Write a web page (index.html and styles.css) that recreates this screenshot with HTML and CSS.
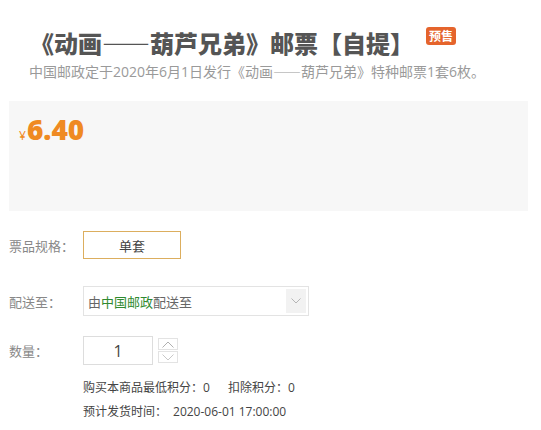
FILE: index.html
```html
<!DOCTYPE html>
<html lang="zh-CN">
<head>
<meta charset="utf-8">
<title>《动画——葫芦兄弟》邮票【自提】</title>
<link rel="stylesheet" href="styles.css">
</head>
<body>
<div class="page">
  <div class="title-row">
    <h1 class="title">《动画——葫芦兄弟》邮票【自提】</h1>
    <span class="badge">预售</span>
  </div>
  <p class="subtitle">中国邮政定于2020年6月1日发行《动画<span class="cjk">——</span>葫芦兄弟》特种邮票1套6枚。</p>

  <div class="price-box">
    <div class="price"><span class="yen">¥</span><span class="amount">6.40</span></div>
  </div>

  <div class="row row-spec">
    <span class="label">票品规格：</span>
    <div class="spec-option">单套</div>
  </div>

  <div class="row row-ship">
    <span class="label">配送至：</span>
    <div class="select">
      <span class="select-text">由<span class="green">中国邮政</span>配送至</span>
      <span class="select-arrow">
        <svg width="10" height="6" viewBox="0 0 10 6"><path d="M0.5 0.5 L5 5 L9.5 0.5" fill="none" stroke="#b5b5b5" stroke-width="1"/></svg>
      </span>
    </div>
  </div>

  <div class="row row-qty">
    <span class="label">数量：</span>
    <div class="qty-input">1</div>
    <div class="spin">
      <span class="spin-btn">
        <svg width="12" height="7" viewBox="0 0 12 7"><path d="M0.5 6.5 L6 1 L11.5 6.5" fill="none" stroke="#b0b0b0" stroke-width="1"/></svg>
      </span>
      <span class="spin-btn">
        <svg width="12" height="7" viewBox="0 0 12 7"><path d="M0.5 0.5 L6 6 L11.5 0.5" fill="none" stroke="#c8c8c8" stroke-width="1"/></svg>
      </span>
    </div>
  </div>

  <div class="info">
    <p class="info-line"><span>购买本商品最低积分：0</span><span class="gap">扣除积分：0</span></p>
    <p class="info-line"><span>预计发货时间：</span><span class="date">2020-06-01 17:00:00</span></p>
  </div>
</div>
</body>
</html>
```

FILE: styles.css
```css
* { box-sizing: border-box; }
body {
  margin: 0;
  background: #fff;
  font-family: "Open Sans", "Noto Sans CJK SC", sans-serif;
  color: #333;
}
.page {
  width: 541px;
  padding: 0 13px 0 9px;
}
.title-row {
  display: flex;
  align-items: center;
  margin-top: 26px;
  padding-left: 21px;
  height: 34px;
}
.title {
  margin: 0;
  font-size: 24px;
  font-weight: 900;
  color: #555;
  line-height: 34px;
  font-family: "Noto Sans CJK SC", sans-serif;
}
.badge {
  margin-left: 12px;
  margin-top: -14px;
  background: #e5642c;
  color: #fff;
  font-size: 12px;
  font-weight: bold;
  line-height: 18px;
  height: 18px;
  padding: 0 3px;
  border-radius: 3px;
  font-family: "Noto Sans CJK SC", sans-serif;
}
.subtitle {
  margin: 1px 0 0;
  padding-left: 20px;
  font-size: 14px;
  line-height: 20px;
  color: #9a9a9a;
}
.cjk { font-family: "Noto Sans CJK SC", sans-serif; }
.price-box {
  margin-top: 19px;
  height: 110px;
  background: #f7f7f7;
  padding: 10px 0 0 10px;
}
.price {
  display: flex;
  align-items: baseline;
  color: #ef8a22;
  line-height: 36px;
}
.yen {
  font-size: 12px;
  margin-right: 1px;
}
.amount {
  font-size: 28px;
  font-weight: 800;
}
.row {
  display: flex;
  align-items: center;
}
.label {
  width: 74px;
  font-size: 13px;
  color: #888;
  font-family: "Noto Sans CJK SC", sans-serif;
}
.row-spec { margin-top: 20px; height: 28px; }
.spec-option {
  width: 98px;
  height: 28px;
  border: 1px solid #dcae5e;
  display: flex;
  align-items: center;
  justify-content: center;
  font-size: 13px;
  color: #444;
}
.row-ship { margin-top: 27px; height: 30px; }
.select {
  width: 226px;
  height: 30px;
  border: 1px solid #e3e3e3;
  display: flex;
  align-items: center;
  justify-content: space-between;
  padding: 2px 2px 2px 4px;
}
.select-text {
  font-size: 13px;
  color: #666;
}
.green { color: #2f8a2f; }
.select-arrow {
  width: 20px;
  height: 100%;
  background: #f2f2f2;
  display: flex;
  align-items: center;
  justify-content: center;
}
.row-qty { margin-top: 20px; height: 29px; }
.qty-input {
  width: 70px;
  height: 29px;
  border: 1px solid #ddd;
  display: flex;
  align-items: center;
  justify-content: center;
  font-size: 16px;
  color: #444;
}
.spin {
  display: flex;
  flex-direction: column;
  gap: 1px;
  margin-left: 5px;
  align-self: flex-start;
  margin-top: 2px;
}
.spin-btn {
  width: 20px;
  height: 12px;
  border: 1px solid #e3e3e3;
  display: flex;
  align-items: center;
  justify-content: center;
}
.info {
  margin-top: 13px;
  padding-left: 74px;
}
.info-line {
  margin: 0 0 4px;
  font-size: 12px;
  line-height: 20px;
  color: #444;
}
.gap { margin-left: 18px; }
.date { margin-left: 6px; }
```
